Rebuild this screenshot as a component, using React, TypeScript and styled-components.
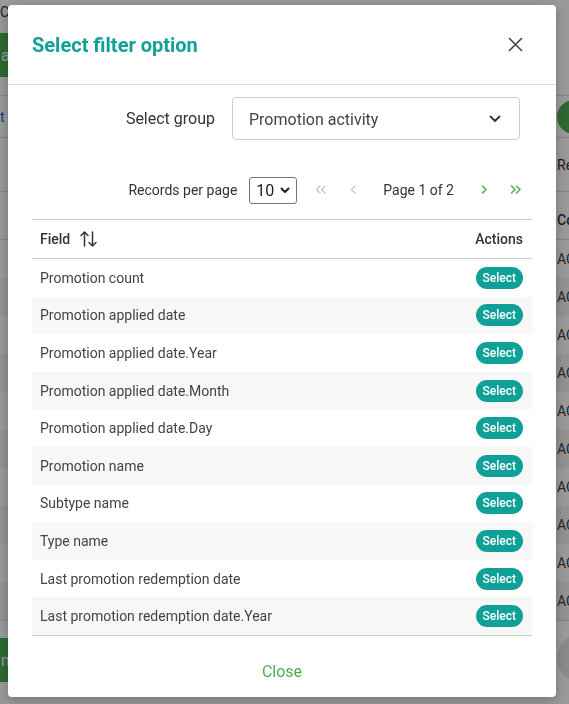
import React from 'react';
import styled, { createGlobalStyle } from 'styled-components';

const GlobalStyle = createGlobalStyle`
  html, body {
    margin: 0;
    padding: 0;
    height: 100%;
    overflow: hidden;
  }
  body {
    font-family: Roboto, 'Liberation Sans', Arial, sans-serif;
    background: #fff;
    color: #333;
  }
  * {
    box-sizing: border-box;
  }
`;

const fields = [
  'Promotion count',
  'Promotion applied date',
  'Promotion applied date.Year',
  'Promotion applied date.Month',
  'Promotion applied date.Day',
  'Promotion name',
  'Subtype name',
  'Type name',
  'Last promotion redemption date',
  'Last promotion redemption date.Year',
];

/* ---------- page behind the dialog ---------- */

const Page = styled.div`
  width: 660px;
  height: 704px;
  display: flex;
  flex-direction: column;
  font-size: 14px;
  white-space: nowrap;
`;

const TopBar = styled.div`
  height: 28px;
  padding-top: 4px;
  color: #333;
`;

const Toolbar = styled.div`
  margin-top: 5px;
  display: flex;
`;

const GreenButton = styled.button`
  height: 44px;
  padding: 0 14px 0 1px;
  border: none;
  border-radius: 0 4px 4px 0;
  background: #4caf50;
  color: #fff;
  font: inherit;
  font-size: 16px;
`;

const Split = styled.div<{ $h: number; $top?: boolean }>`
  display: grid;
  grid-template-columns: 557px 1fr;
  align-items: center;
  height: ${({ $h }) => $h}px;
  border-bottom: 1px solid #ddd;
  border-top: ${({ $top }) => ($top ? '1px solid #ddd' : 'none')};
`;

const FilterArea = styled.div`
  margin-top: 18px;
`;

const BgLink = styled.span`
  color: #1565c0;
`;

const RoundButton = styled.span`
  display: block;
  width: 34px;
  height: 34px;
  border-radius: 50%;
  background: #4caf50;
`;

const GreyRound = styled(RoundButton)`
  width: 48px;
  height: 48px;
  background: #e6e6e6;
`;

const BgTable = styled.div`
  margin-top: 8px;
  border-bottom: 1px solid #ddd;
`;

const BgRow = styled.div<{ $striped: boolean }>`
  display: grid;
  grid-template-columns: 557px 1fr;
  align-items: center;
  height: 38px;
  background: ${({ $striped }) => ($striped ? '#f3f3f3' : '#fff')};
  color: #444;
`;

const BgHead = styled(BgRow)`
  height: 40px;
  font-weight: 500;
  color: #333;
  border-bottom: 1px solid #ddd;
`;

const BgCell = styled.span`
  padding-left: 40px;
`;

const BgFooter = styled.div`
  margin-top: 12px;
  display: grid;
  grid-template-columns: 557px 1fr;
  align-items: center;
`;

/* ---------- dialog ---------- */

const Backdrop = styled.div`
  position: fixed;
  inset: 0;
  background: rgba(0, 0, 0, 0.4);
`;

const Dialog = styled.div`
  position: fixed;
  top: 5px;
  left: 8px;
  width: 548px;
  background: #fff;
  border-radius: 4px;
  box-shadow: 0 3px 12px rgba(0, 0, 0, 0.25);
  display: flex;
  flex-direction: column;
`;

const Header = styled.div`
  height: 80px;
  padding: 0 29px 0 24px;
  border-bottom: 1px solid #dcdcdc;
  display: flex;
  align-items: center;
  justify-content: space-between;
`;

const Title = styled.h2`
  margin: 0;
  font-size: 20px;
  font-weight: 700;
  color: #11a197;
`;

const IconButton = styled.button`
  width: 24px;
  height: 24px;
  padding: 0;
  border: none;
  background: none;
  display: flex;
  align-items: center;
  justify-content: center;
  cursor: pointer;
`;

const Body = styled.div`
  padding: 12px 24px 0;
`;

const GroupRow = styled.div`
  display: flex;
  justify-content: flex-end;
  align-items: center;
  gap: 17px;
  padding-right: 12px;
`;

const Label = styled.span`
  font-size: 16px;
  color: #333;
`;

const GroupSelect = styled.div`
  width: 288px;
  height: 43px;
  padding: 1px 18px 0 16px;
  border: 1px solid #ccc;
  border-radius: 4px;
  display: flex;
  align-items: center;
  justify-content: space-between;
  font-size: 16px;
  color: #444;
`;

const PagerRow = styled.div`
  margin-top: 36px;
  height: 28px;
  display: flex;
  justify-content: flex-end;
  align-items: center;
  font-size: 14px;
  color: #333;
`;

const PagerLabel = styled.span`
  margin-right: 12px;
`;

const SizeSelect = styled.div`
  width: 48px;
  height: 27px;
  margin-right: 8px;
  padding: 0 6px;
  border: 1px solid #767676;
  border-radius: 3px;
  display: flex;
  align-items: center;
  justify-content: space-between;
  font-size: 16px;
  color: #222;
`;

const NavButton = styled.button`
  width: 32px;
  height: 28px;
  padding: 0;
  border: none;
  background: none;
  display: flex;
  align-items: center;
  justify-content: center;
  cursor: pointer;
`;

const PageText = styled.span`
  margin: 0 14px;
`;

const Table = styled.div`
  margin-top: 15px;
  border-top: 1px solid #ccc;
  border-bottom: 1px solid #ccc;
`;

const HeadRow = styled.div`
  height: 39px;
  padding: 0 9px 0 8px;
  border-bottom: 1px solid #ccc;
  display: flex;
  align-items: center;
  justify-content: space-between;
  font-size: 14px;
  font-weight: 500;
  color: #333;
`;

const HeadCell = styled.span`
  display: flex;
  align-items: center;
  gap: 10px;
`;

const Row = styled.div<{ $striped: boolean }>`
  height: 37.6px;
  padding: 0 9px 0 8px;
  display: flex;
  align-items: center;
  justify-content: space-between;
  font-size: 14px;
  color: #444;
  background: ${({ $striped }) => ($striped ? '#f7f7f7' : '#fff')};
`;

const Pill = styled.button`
  height: 22px;
  padding: 0 7px;
  border: none;
  border-radius: 11px;
  background: #0fa197;
  color: #fff;
  font-family: inherit;
  font-size: 12px;
  font-weight: 500;
  cursor: pointer;
`;

const Footer = styled.div`
  padding: 25px 0 14px;
  display: flex;
  justify-content: center;
`;

const CloseLink = styled.button`
  padding: 0;
  border: none;
  background: none;
  font-family: inherit;
  font-size: 16px;
  line-height: 22px;
  color: #4caf50;
  cursor: pointer;
`;

const Chevron = ({ dir, color, double }: { dir: 'left' | 'right'; color: string; double?: boolean }) => {
  const one = dir === 'left' ? 'M5 1 L1.5 4.5 L5 8' : 'M1.5 1 L5 4.5 L1.5 8';
  const two = dir === 'left' ? 'M10 1 L6.5 4.5 L10 8' : 'M6.5 1 L10 4.5 L6.5 8';
  return (
    <svg width={double ? 12 : 7} height="10" viewBox={double ? '0 0 12 10' : '0 0 7 10'} fill="none">
      <path d={one} stroke={color} strokeWidth="1.5" strokeLinecap="round" strokeLinejoin="round" />
      {double && <path d={two} stroke={color} strokeWidth="1.5" strokeLinecap="round" strokeLinejoin="round" />}
    </svg>
  );
};

const DISABLED = '#c8c8c8';
const ACTIVE = '#4caf50';

const App = () => {
  return (
    <>
      <GlobalStyle />
      <Page>
        <TopBar>Ct</TopBar>
        <Toolbar>
          <GreenButton>a</GreenButton>
        </Toolbar>
        <FilterArea>
          <Split $h={43} $top>
            <BgLink>t</BgLink>
            <RoundButton />
          </Split>
          <Split $h={54}>
            <span />
            <span>Records</span>
          </Split>
        </FilterArea>
        <BgTable>
          <BgHead $striped={false}>
            <BgCell>Name</BgCell>
            <span>Code</span>
          </BgHead>
          {fields.map((f, i) => (
            <BgRow key={f} $striped={i % 2 === 1}>
              <BgCell>{f}</BgCell>
              <span>ACTIVE</span>
            </BgRow>
          ))}
        </BgTable>
        <BgFooter>
          <Toolbar>
            <GreenButton>m</GreenButton>
          </Toolbar>
          <GreyRound />
        </BgFooter>
      </Page>

      <Backdrop />
      <Dialog>
        <Header>
          <Title>Select filter option</Title>
          <IconButton aria-label="Close">
            <svg width="15" height="15" viewBox="0 0 15 15" fill="none">
              <path d="M1.5 1.5 L13.5 13.5 M13.5 1.5 L1.5 13.5" stroke="#444" strokeWidth="1.6" strokeLinecap="round" />
            </svg>
          </IconButton>
        </Header>

        <Body>
          <GroupRow>
            <Label>Select group</Label>
            <GroupSelect>
              <span>Promotion activity</span>
              <svg width="12" height="8" viewBox="0 0 12 8" fill="none">
                <path d="M1.5 1.5 L6 6 L10.5 1.5" stroke="#333" strokeWidth="1.8" strokeLinecap="round" strokeLinejoin="round" />
              </svg>
            </GroupSelect>
          </GroupRow>

          <PagerRow>
            <PagerLabel>Records per page</PagerLabel>
            <SizeSelect>
              <span>10</span>
              <svg width="10" height="7" viewBox="0 0 10 7" fill="none">
                <path d="M1.5 1.5 L5 5 L8.5 1.5" stroke="#222" strokeWidth="2" strokeLinecap="round" strokeLinejoin="round" />
              </svg>
            </SizeSelect>
            <NavButton aria-label="First page">
              <Chevron dir="left" color={DISABLED} double />
            </NavButton>
            <NavButton aria-label="Previous page">
              <Chevron dir="left" color={DISABLED} />
            </NavButton>
            <PageText>Page 1 of 2</PageText>
            <NavButton aria-label="Next page">
              <Chevron dir="right" color={ACTIVE} />
            </NavButton>
            <NavButton aria-label="Last page">
              <Chevron dir="right" color={ACTIVE} double />
            </NavButton>
          </PagerRow>

          <Table>
            <HeadRow>
              <HeadCell>
                Field
                <svg width="17" height="18" viewBox="0 0 17 18" fill="none">
                  <path d="M4.5 2 V16 M1 5.5 L4.5 2 L8 5.5" stroke="#333" strokeWidth="1.5" strokeLinecap="round" strokeLinejoin="round" />
                  <path d="M12.5 2 V16 M9 12.5 L12.5 16 L16 12.5" stroke="#333" strokeWidth="1.5" strokeLinecap="round" strokeLinejoin="round" />
                </svg>
              </HeadCell>
              <span>Actions</span>
            </HeadRow>
            {fields.map((f, i) => (
              <Row key={f} $striped={i % 2 === 1}>
                <span>{f}</span>
                <Pill>Select</Pill>
              </Row>
            ))}
          </Table>
        </Body>

        <Footer>
          <CloseLink>Close</CloseLink>
        </Footer>
      </Dialog>
    </>
  );
};

export default App;
